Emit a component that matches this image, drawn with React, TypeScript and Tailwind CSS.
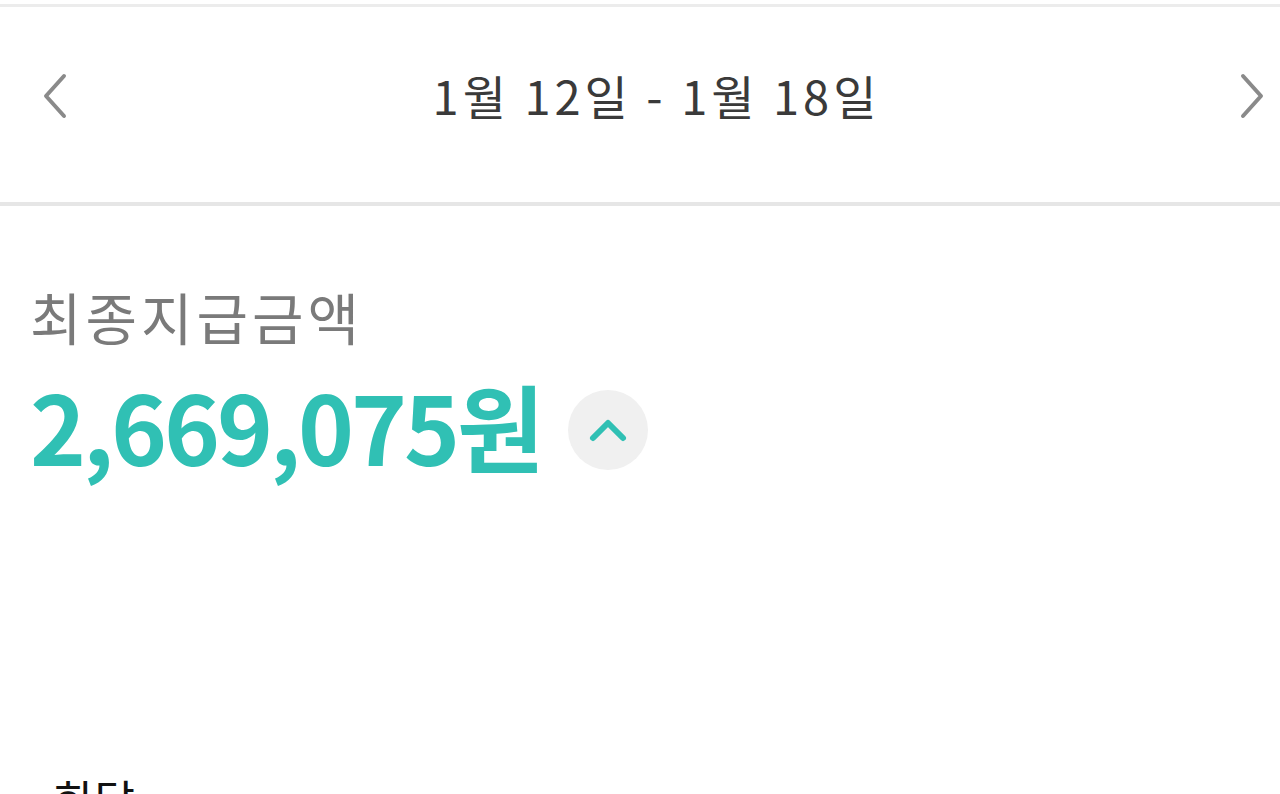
import React from "react";

export default function App() {
  return (
    <div
      className="w-[1280px] h-[794px] overflow-hidden bg-white flex flex-col"
      style={{ fontFamily: '"Noto Sans CJK KR", "Noto Sans", sans-serif' }}
    >
      <div className="h-[4px] shrink-0 bg-white" />
      <div className="h-[3px] shrink-0 bg-[#ececec]" />
      <div className="h-[195px] shrink-0 flex items-center justify-between pl-[38px] pr-[11px]">
        <svg width="34" height="48" viewBox="0 0 34 48" className="mt-[-18px]">
          <path d="M26 4 L8 24 L26 44" fill="none" stroke="#8a8a8a" strokeWidth="4" strokeLinecap="round" strokeLinejoin="round" />
        </svg>
        <div className="text-[47px] leading-none text-[#3a3a3a] tracking-[4px] mt-[-20px] pl-[6px]">1월 12일 - 1월 18일</div>
        <svg width="34" height="48" viewBox="0 0 34 48" className="mt-[-18px]">
          <path d="M8 4 L26 24 L8 44" fill="none" stroke="#8a8a8a" strokeWidth="4" strokeLinecap="round" strokeLinejoin="round" />
        </svg>
      </div>
      <div className="h-[4px] shrink-0 bg-[#e6e6e6]" />
      <div className="flex flex-col px-[30px] pt-[82px]">
        <div className="text-[56px] leading-none text-[#7a7a7a] tracking-[4px]">최종지급금액</div>
        <div className="flex items-center mt-[33px]">
          <div className="text-[95px] leading-none font-bold text-[#30c0b4] tracking-[-3px]">2,669,075원</div>
          <div className="ml-[26px] w-[80px] h-[80px] rounded-full bg-[#f0f0f0] flex items-center justify-center mt-[10px]">
            <svg width="40" height="26" viewBox="0 0 40 26">
              <path d="M5 21 L20 6 L35 21" fill="none" stroke="#30c0b4" strokeWidth="6" strokeLinecap="round" strokeLinejoin="round" />
            </svg>
          </div>
        </div>
        <div className="mt-[305px] text-[44px] leading-none text-[#111] pl-[24px]">한달</div>
      </div>
    </div>
  );
}
